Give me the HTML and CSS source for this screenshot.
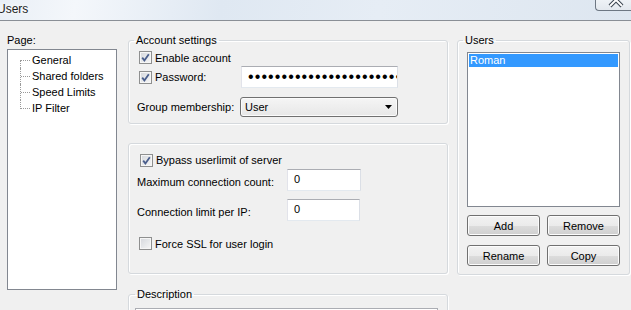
FILE: index.html
```html
<!DOCTYPE html>
<html lang="en">
<head>
  <meta charset="UTF-8">
  <title>Users</title>
  <link rel="stylesheet" href="styles.css">
</head>
<body>
  <div class="titlebar">
    <span class="title">Users</span>
    <div class="close">
      <svg width="16" height="10" viewBox="0 0 16 10">
        <line x1="2" y1="-6" x2="14" y2="6" stroke="#3a4450" stroke-width="4"/>
        <line x1="14" y1="-6" x2="2" y2="6" stroke="#3a4450" stroke-width="4"/>
        <line x1="2" y1="-6" x2="14" y2="6" stroke="#fff" stroke-width="2"/>
        <line x1="14" y1="-6" x2="2" y2="6" stroke="#fff" stroke-width="2"/>
      </svg>
    </div>
  </div>

  <div class="dialog">
    <div class="col-page">
      <div class="label">Page:</div>
      <ul class="tree">
        <li class="first">General</li>
        <li>Shared folders</li>
        <li>Speed Limits</li>
        <li class="last">IP Filter</li>
      </ul>
    </div>

    <div class="col-main">
      <fieldset class="group account">
        <legend>Account settings</legend>
        <div class="row r-enable">
          <span class="box checked"></span>Enable account
        </div>
        <div class="row r-pass">
          <span class="box checked"></span><span class="lbl-short">Password:</span>
          <div class="field password">&bull;&bull;&bull;&bull;&bull;&bull;&bull;&bull;&bull;&bull;&bull;&bull;&bull;&bull;&bull;&bull;&bull;&bull;&bull;&bull;&bull;&bull;&bull;&bull;</div>
        </div>
        <div class="row r-group">
          <span class="lbl-group">Group membership:</span>
          <div class="select">
            <span>User</span>
            <svg width="7" height="4" viewBox="0 0 7 4"><path d="M0 0H7L3.5 4Z" fill="#000"/></svg>
          </div>
        </div>
      </fieldset>

      <fieldset class="group limits">
        <div class="row r-bypass">
          <span class="box checked"></span>Bypass userlimit of server
        </div>
        <div class="row r-max">
          <span class="lbl-limit">Maximum connection count:</span>
          <div class="field num">0</div>
        </div>
        <div class="row r-ip">
          <span class="lbl-limit">Connection limit per IP:</span>
          <div class="field num">0</div>
        </div>
        <div class="row r-ssl">
          <span class="box"></span>Force SSL for user login
        </div>
      </fieldset>

      <fieldset class="group description">
        <legend>Description</legend>
        <div class="textarea"></div>
      </fieldset>
    </div>

    <div class="col-users">
      <fieldset class="group users">
        <legend>Users</legend>
        <ul class="listbox">
          <li class="selected">Roman</li>
        </ul>
        <div class="buttons">
          <button class="btn">Add</button>
          <button class="btn">Remove</button>
          <button class="btn">Rename</button>
          <button class="btn">Copy</button>
        </div>
      </fieldset>
    </div>
  </div>
</body>
</html>
```

FILE: styles.css
```css
body {
  margin: 0;
  background: #f0f0f0;
  font-family: 'Liberation Sans', Arial, sans-serif;
  font-size: 11px;
  line-height: 14px;
  color: #000;
  overflow: hidden;
}
.titlebar {
  display: flex;
  height: 20px;
  border-bottom: 1px solid #8a8f96;
  background: linear-gradient(100deg, #e9eff6 0%, #f4f7fb 12%, #dfe8f2 35%, #e6edf5 60%, #dde6f0 100%);
}
.title {
  margin-left: -3px;
  margin-top: 2px;
  font-size: 12px;
  color: #1a1a1a;
  text-shadow: 0 0 6px #fff, 0 0 6px #fff;
}
.close {
  margin-left: auto;
  width: 35px;
  height: 10px;
  border-left: 1px solid #6d7783;
  border-bottom: 1px solid #6d7783;
  border-bottom-left-radius: 4px;
  background: linear-gradient(#eef2f6, #e3e8ee);
  display: flex;
  justify-content: center;
}
.close svg {
  display: block;
  margin-left: 4px;
}
.dialog {
  display: flex;
  padding-top: 12px;
}

/* left page list */
.col-page {
  width: 110px;
  margin-left: 7px;
}
.label {
  height: 14px;
  margin-bottom: 2px;
}
.tree {
  list-style: none;
  margin: 0;
  padding: 2px 0 0 0;
  height: 241px;
  box-sizing: border-box;
  border: 1px solid #828790;
  background: #fff;
}
.tree li {
  position: relative;
  height: 16px;
  line-height: 16px;
  padding-left: 24px;
}
.tree li::before {
  content: '';
  position: absolute;
  left: 13px;
  top: 8px;
  width: 9px;
  border-top: 1px dotted #9a9a9a;
}
.tree li::after {
  content: '';
  position: absolute;
  left: 12px;
  top: 0;
  height: 16px;
  border-left: 1px dotted #9a9a9a;
}
.tree li.first::after {
  top: 8px;
  height: 8px;
}
.tree li.last::after {
  height: 9px;
}

/* group boxes */
.group {
  margin: 0;
  border: 1px solid #d5d9dd;
  border-radius: 3px;
  box-shadow: inset 1px 1px 0 #fff, 1px 1px 0 #fff;
  min-inline-size: 0;
}
.group legend {
  padding: 0 2px;
  line-height: 14px;
}
.col-main {
  width: 320px;
  margin-left: 11px;
}
.row {
  display: flex;
  align-items: center;
  white-space: nowrap;
}
.box {
  width: 13px;
  height: 13px;
  box-sizing: border-box;
  border: 1px solid #8e8f8f;
  background: linear-gradient(135deg, #d4d7dc, #f7f7f7);
  box-shadow: inset 0 0 0 1px #f6f6f6;
  margin-right: 3px;
  flex: none;
}
.box.checked {
  background: url("data:image/svg+xml,%3Csvg xmlns='http://www.w3.org/2000/svg' width='11' height='11'%3E%3Cpath d='M2.2 5.6L4.4 8.4L8.8 2.2' fill='none' stroke='%234a5e8c' stroke-width='1.8'/%3E%3C/svg%3E") center no-repeat, linear-gradient(135deg, #d4d7dc, #f7f7f7);
}
.field {
  box-sizing: border-box;
  height: 22px;
  background: #fff;
  border: 1px solid;
  border-color: #abadb3 #dbdfe6 #e3e9ef #e2e3ea;
  overflow: hidden;
  white-space: nowrap;
}

.account {
  padding: 1px 8px 6px 8px;
}
.account legend {
  margin-left: -3px;
}
.r-enable {
  height: 19px;
  padding-left: 2px;
}
.r-pass {
  height: 22px;
  margin-top: -1px;
  padding-left: 2px;
}
.lbl-short {
  width: 86px;
}
.password {
  width: 157px;
  font-size: 16px;
  line-height: 19px;
  letter-spacing: 1.1px;
  padding-left: 6px;
}
.r-group {
  height: 20px;
  margin-top: 9px;
}
.lbl-group {
  width: 103px;
}
.select {
  box-sizing: border-box;
  width: 158px;
  height: 20px;
  border: 1px solid #707070;
  border-radius: 3px;
  background: linear-gradient(#f5f5f5, #e7e7e7);
  box-shadow: inset 0 0 0 1px #fbfbfb;
  display: flex;
  align-items: center;
  justify-content: space-between;
  padding: 0 5px 0 4px;
}

.limits {
  margin-top: 19px;
  padding: 7px 8px 20px 8px;
}
.r-bypass {
  height: 18px;
  padding-left: 3px;
}
.lbl-limit {
  width: 150px;
  padding-top: 3px;
}
.r-max .field {
  width: 74px;
}
.r-ip {
  margin-top: 8px;
}
.r-ip .field {
  width: 73px;
}
.num {
  padding: 2px 6px;
  line-height: 14px;
}
.r-ssl {
  height: 19px;
  margin-top: 13px;
  padding-left: 2px;
}

.description {
  margin-top: 13px;
  padding: 7px 9px 0 6px;
}
.description legend {
  margin-left: 0;
}
.textarea {
  height: 60px;
  border: 1px solid #abadb3;
  background: #fff;
}

/* users list */
.col-users {
  width: 173px;
  margin-left: 9px;
}
.users {
  padding: 5px 9px 8px 9px;
}
.users legend {
  margin-left: -4px;
}
.listbox {
  list-style: none;
  margin: 0;
  padding: 1px;
  height: 155px;
  box-sizing: border-box;
  border: 1px solid #828790;
  background: #fff;
}
.listbox li {
  height: 13px;
  line-height: 13px;
  padding-left: 1px;
}
.listbox li.selected {
  background: #3399ff;
  color: #fff;
}
.buttons {
  display: grid;
  grid-template-columns: 73px 73px;
  column-gap: 7px;
  row-gap: 9px;
  margin-top: 8px;
}
.btn {
  height: 21px;
  padding: 0;
  font-family: inherit;
  font-size: 11px;
  color: #000;
  border: 1px solid #707070;
  border-radius: 3px;
  background: linear-gradient(#f2f2f2 0%, #ebebeb 50%, #dddddd 51%, #cfcfcf 100%);
  box-shadow: inset 0 0 0 1px #fcfcfc;
}
```
